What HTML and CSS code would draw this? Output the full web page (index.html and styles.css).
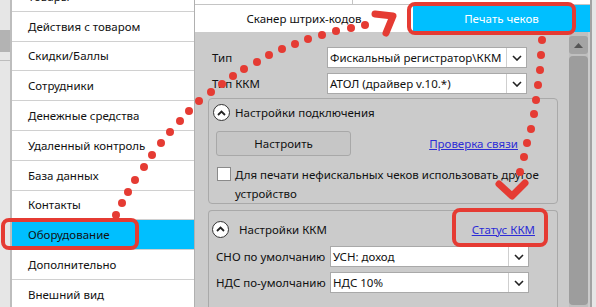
FILE: index.html
```html
<!DOCTYPE html>
<html lang="ru">

<head>
    <meta charset="UTF-8">
    <title>Оборудование</title>
    <link rel="stylesheet" href="styles.css">
</head>

<body>
    <div class="screen">
        <div class="edge">
            <span class="edge-light h30"></span>
            <span class="edge-dark h22"></span>
            <span class="edge-light h8"></span>
            <span class="edge-line"></span>
            <span class="edge-light fill"></span>
        </div>

        <ul class="menu">
            <li>Товары</li>
            <li>Действия с товаром</li>
            <li>Скидки/Баллы</li>
            <li>Сотрудники</li>
            <li>Денежные средства</li>
            <li>Удаленный контроль</li>
            <li>База данных</li>
            <li>Контакты</li>
            <li class="active">Оборудование</li>
            <li>Дополнительно</li>
            <li>Внешний вид</li>
        </ul>

        <div class="main">
            <div class="tabs-top">
                <span class="tab-stub"></span>
                <span class="tab-stub"></span>
            </div>
            <div class="tabs">
                <div class="tab">Сканер штрих-кодов</div>
                <div class="tab active">Печать чеков</div>
            </div>

            <div class="panel">
                <div class="content">
                    <div class="field">
                        <label>Тип</label>
                        <div class="select">
                            <span class="select-text">Фискальный регистратор\ККМ</span>
                            <span class="select-arrow"><svg width="10" height="6" viewBox="0 0 10 6"><path d="M1 1l4 4 4-4" fill="none" stroke="#222" stroke-width="1.6"/></svg></span>
                        </div>
                    </div>
                    <div class="field">
                        <label>Тип ККМ</label>
                        <div class="select">
                            <span class="select-text">АТОЛ (драйвер v.10.*)</span>
                            <span class="select-arrow"><svg width="10" height="6" viewBox="0 0 10 6"><path d="M1 1l4 4 4-4" fill="none" stroke="#222" stroke-width="1.6"/></svg></span>
                        </div>
                    </div>

                    <div class="group group-connect">
                        <div class="group-head">
                            <span class="toggle"><svg width="9" height="6" viewBox="0 0 9 6"><path d="M1 5l3.5-3.5L8 5" fill="none" stroke="#222" stroke-width="1.8"/></svg></span>
                            <span>Настройки подключения</span>
                        </div>
                        <div class="connect-row">
                            <button class="btn">Настроить</button>
                            <a class="link" href="#">Проверка связи</a>
                        </div>
                        <div class="check-row">
                            <span class="checkbox"></span>
                            <span class="check-text">Для печати нефискальных чеков использовать другое<br>устройство</span>
                        </div>
                    </div>

                    <div class="group group-kkm">
                        <div class="group-head">
                            <span class="toggle"><svg width="9" height="6" viewBox="0 0 9 6"><path d="M1 5l3.5-3.5L8 5" fill="none" stroke="#222" stroke-width="1.8"/></svg></span>
                            <span class="head-title">Настройки ККМ</span>
                            <a class="link" href="#">Статус ККМ</a>
                        </div>
                        <div class="field field-kkm">
                            <label>СНО по умолчанию</label>
                            <div class="select">
                                <span class="select-text">УСН: доход</span>
                                <span class="select-arrow"><svg width="10" height="6" viewBox="0 0 10 6"><path d="M1 1l4 4 4-4" fill="none" stroke="#222" stroke-width="1.6"/></svg></span>
                            </div>
                        </div>
                        <div class="field field-kkm">
                            <label>НДС по-умолчанию</label>
                            <div class="select">
                                <span class="select-text">НДС 10%</span>
                                <span class="select-arrow"><svg width="10" height="6" viewBox="0 0 10 6"><path d="M1 1l4 4 4-4" fill="none" stroke="#222" stroke-width="1.6"/></svg></span>
                            </div>
                        </div>
                        <a class="link more" href="#">Дополнительные настройки ККМ</a>
                    </div>
                </div>

                <div class="scrollbar">
                    <div class="sb-up"><svg width="9" height="5" viewBox="0 0 9 5"><path d="M0 5L4.5 0 9 5z" fill="#555"/></svg></div>
                    <div class="sb-thumb"></div>
                </div>
            </div>
        </div>

        <div class="right-edge"></div>

        <!-- пометки поверх скриншота -->
        <svg class="marks" width="596" height="307" viewBox="0 0 596 307">
            <g fill="#e53b33">
                <circle cx="116" cy="215" r="4" />
                <circle cx="122" cy="203" r="4" />
                <circle cx="128" cy="192" r="4" />
                <circle cx="135" cy="180" r="4" />
                <circle cx="144" cy="167" r="4" />
                <circle cx="152" cy="155" r="4" />
                <circle cx="161" cy="143" r="4" />
                <circle cx="170" cy="132" r="4" />
                <circle cx="180" cy="121" r="4" />
                <circle cx="189" cy="111" r="4" />
                <circle cx="199" cy="101" r="4" />
                <circle cx="211" cy="92" r="4" />
                <circle cx="222" cy="84" r="4" />
                <circle cx="233" cy="76" r="4" />
                <circle cx="244" cy="69" r="4" />
                <circle cx="257" cy="62" r="4" />
                <circle cx="269" cy="55" r="4" />
                <circle cx="282" cy="49" r="4" />
                <circle cx="295" cy="44" r="4" />
                <circle cx="308" cy="39" r="4" />
                <circle cx="322" cy="35" r="4" />
                <circle cx="336" cy="31" r="4" />
                <circle cx="351" cy="28" r="4" />
                <circle cx="365" cy="25" r="4" />

                <circle cx="542" cy="40" r="4" />
                <circle cx="541" cy="55" r="4" />
                <circle cx="540" cy="70" r="4" />
                <circle cx="538" cy="85" r="4" />
                <circle cx="536" cy="100" r="4" />
                <circle cx="534" cy="114" r="4" />
                <circle cx="531" cy="129" r="4" />
                <circle cx="527" cy="143" r="4" />
                <circle cx="524" cy="157" r="4" />
                <circle cx="520" cy="172" r="4" />
            </g>
            <g fill="none" stroke="#e53b33" stroke-width="7" stroke-linecap="round" stroke-linejoin="round">
                <path d="M375 14L393 16 386 33" />
                <path d="M499 184L512 196 525 183" />
            </g>
            <g fill="none" stroke="#e53b33" stroke-width="4">
                <rect x="3" y="220" width="134" height="28" rx="6" />
                <rect x="409" y="4" width="165" height="29" rx="6" />
                <rect x="454" y="210" width="92" height="35" rx="6" />
            </g>
        </svg>
    </div>
</body>

</html>
```

FILE: styles.css
```css
* {
    box-sizing: border-box;
}

body {
    margin: 0;
    width: 596px;
    height: 307px;
    overflow: hidden;
    font-family: 'Noto Sans', 'Open Sans', sans-serif;
    font-size: 11.5px;
    color: #111;
}

.screen {
    position: relative;
    display: flex;
    height: 307px;
    background: #e6e6e6;
    overflow: hidden;
}

/* кусок окна слева */
.edge {
    width: 10px;
    flex: none;
    display: flex;
    flex-direction: column;
}

.edge-light {
    background: #e6e6e6;
}

.edge-dark {
    background: #b3b3b3;
}

.edge-line {
    height: 1px;
    background: #bdbdbd;
}

.h30 { height: 30px; }
.h22 { height: 22px; }
.h8 { height: 8px; }
.fill { flex: 1; }

/* меню настроек */
.menu {
    width: 185px;
    flex: none;
    list-style: none;
    margin: -18px 0 0;
    padding: 0;
    background: #fff;
    border-left: 2px solid #bdbdbd;
    border-right: 1px solid #b0b0b0;
}

.menu li {
    height: 29.8px;
    display: flex;
    align-items: center;
    padding-left: 16px;
    border-bottom: 1px solid #d0d0d0;
    white-space: nowrap;
}

.menu li.active {
    background: #00bfff;
}

.main {
    flex: 1;
    display: flex;
    flex-direction: column;
    min-width: 0;
}

.tabs-top {
    height: 5px;
    display: flex;
    background: #fff;
    border-bottom: 1px solid #c4c4c4;
}

.tab-stub:first-child {
    width: 158px;
    border-right: 1px solid #c4c4c4;
}

.tabs {
    height: 27px;
    display: flex;
}

.tab {
    width: 218px;
    display: flex;
    align-items: center;
    justify-content: center;
    background: #fff;
}

.tab.active {
    flex: 1;
    background: #00bfff;
    color: #fff;
}

.panel {
    flex: 1;
    display: flex;
    background: #cbcbcb;
    min-height: 0;
}

.content {
    flex: 1;
    padding: 15px 11px 0 13px;
    display: flex;
    flex-direction: column;
    gap: 5px;
}

.field {
    display: grid;
    grid-template-columns: 115px 200px;
    align-items: center;
    padding-left: 4px;
}

.field label {
    white-space: nowrap;
}

.select {
    height: 21px;
    display: flex;
    align-items: center;
    background: #fff;
    border: 1px solid #a9a9a9;
}

.select-text {
    flex: 1;
    padding-left: 2px;
    white-space: nowrap;
    overflow: hidden;
}

.select-arrow {
    width: 20px;
    height: 100%;
    display: flex;
    align-items: center;
    justify-content: center;
    border-left: 1px solid #cfcfcf;
}

.group {
    border: 1px solid #a9a9a9;
    border-radius: 4px;
    margin-top: -1px;
}

.group-connect {
    height: 107px;
    padding: 5px 0 0 4px;
}

.group-head {
    display: flex;
    align-items: center;
    gap: 5px;
    height: 17px;
}

.toggle {
    width: 17px;
    height: 17px;
    border-radius: 50%;
    border: 1.5px solid #333;
    background: #fff;
    display: flex;
    align-items: center;
    justify-content: center;
}

.connect-row {
    display: flex;
    align-items: center;
    margin-top: 10px;
    padding: 0 39px 0 3px;
}

.btn {
    width: 135px;
    height: 25px;
    font: inherit;
    color: #111;
    background: #c6c6c6;
    border: 1px solid #a8a8a8;
    border-radius: 3px;
}

.link {
    color: #2d2dd6;
    text-decoration: underline;
    margin-left: auto;
}

.check-row {
    display: flex;
    align-items: flex-start;
    margin-top: 9px;
    padding-left: 4px;
}

.checkbox {
    width: 14px;
    height: 14px;
    margin-top: 2px;
    background: #fff;
    border: 1px solid #8a8a8a;
    flex: none;
}

.check-text {
    margin-left: 4px;
    line-height: 19px;
    white-space: nowrap;
}

.group-kkm {
    margin-top: 1px;
    flex: 1;
    padding: 9px 0 0 3px;
    border-bottom: none;
    border-radius: 4px 4px 0 0;
}

.group-kkm .group-head {
    gap: 10px;
    height: 18px;
    padding-right: 22px;
}

.field-kkm {
    grid-template-columns: 114px 199px;
    padding-left: 4px;
    margin-top: 5px;
}

.group-kkm .group-head + .field-kkm {
    margin-top: 8px;
}

.more {
    display: block;
    margin: 11px 0 0 4px;
}

/* полоса прокрутки */
.scrollbar {
    width: 19px;
    margin-right: 2px;
    flex: none;
    display: flex;
    flex-direction: column;
    gap: 2px;
    padding-top: 4px;
    background: #bfbfbf;
}

.sb-up {
    height: 18px;
    display: flex;
    align-items: center;
    justify-content: center;
    background: #a4a4a4;
    border-radius: 3px;
}

.sb-thumb {
    flex: 1;
    background: #9d9d9d;
    border-radius: 4px;
    margin-bottom: 2px;
}

.right-edge {
    width: 6px;
    flex: none;
    background: #e6e6e6;
    border-left: 2px solid #a3a3a3;
}

.marks {
    position: absolute;
    top: 0;
    left: 0;
    pointer-events: none;
}
```
